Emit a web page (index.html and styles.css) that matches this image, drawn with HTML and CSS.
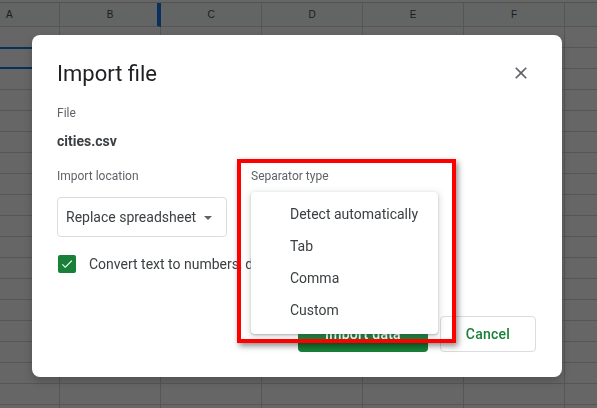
FILE: index.html
```html
<!DOCTYPE html>
<html lang="en">
<head>
    <meta charset="UTF-8">
    <meta name="viewport" content="width=device-width, initial-scale=1.0">
    <title>Import file</title>
    <link rel="stylesheet" href="styles.css">
</head>
<body>

    <!-- Spreadsheet behind the dialog -->
    <div class="sheet" id="sheet">
        <div class="row head">
            <div class="cell first">A</div>
            <div class="cell resize">B</div>
            <div class="cell">C</div>
            <div class="cell">D</div>
            <div class="cell">E</div>
            <div class="cell">F</div>
            <div class="cell"></div>
        </div>
    </div>

    <div class="scrim"></div>

    <!-- Import dialog -->
    <div class="dialog">
        <div class="dialog-title">
            <h1>Import file</h1>
            <button class="close" aria-label="Close">
                <svg width="20" height="20" viewBox="0 0 24 24"><path fill="#5f6368" d="M19 6.41L17.59 5 12 10.590 6.41 5 5 6.41 10.59 12 5 17.59 6.41 19 12 13.41 17.59 19 19 17.59 13.41 12z"/></svg>
            </button>
        </div>

        <div class="label file-label">File</div>
        <div class="file-name">cities.csv</div>

        <div class="options">
            <div class="option-col">
                <div class="label">Import location</div>
                <div class="select">
                    <span>Replace spreadsheet</span>
                    <span class="arrow"></span>
                </div>
                <label class="check-row">
                    <span class="checkbox">
                        <svg width="14" height="14" viewBox="0 0 24 24"><path fill="#fff" d="M9 16.17L4.83 12l-1.42 1.41L9 19 21 7l-1.41-1.41z"/></svg>
                    </span>
                    <span class="check-text">Convert text to numbers, dates, and formulas</span>
                </label>
            </div>
            <div class="option-col sep">
                <div class="label">Separator type</div>
                <div class="menu-anchor">
                    <ul class="menu">
                        <li>Detect automatically</li>
                        <li>Tab</li>
                        <li>Comma</li>
                        <li>Custom</li>
                    </ul>
                </div>
            </div>
        </div>

        <div class="actions">
            <button class="btn primary">Import data</button>
            <button class="btn">Cancel</button>
        </div>

        <!-- Red highlight drawn on the screenshot -->
        <div class="highlight"></div>
    </div>

    <script>
        // fill the grid rows
        const sheet = document.getElementById('sheet');
        for (let r = 1; r <= 19; r++) {
            const row = document.createElement('div');
            row.className = 'row';
            for (let c = 0; c < 7; c++) {
                const cell = document.createElement('div');
                cell.className = c === 0 ? 'cell first' : 'cell';
                if (r === 2 && c === 0) {
                    cell.classList.add('selected');
                }
                row.appendChild(cell);
            }
            sheet.appendChild(row);
        }
    </script>

</body>
</html>
```

FILE: styles.css
```css
body {
    margin: 0;
    font-family: Roboto, Arial, sans-serif;
    background-color: #fff;
    overflow: hidden;
    height: 100vh;
}

/* Spreadsheet grid */
.sheet {
    padding-top: 2px;
    overflow: hidden;
}

.row {
    display: flex;
    height: 21px;
}

.cell {
    flex: 0 0 101px;
    box-sizing: border-box;
    border-right: 1px solid #d6d6d6;
    border-bottom: 1px solid #d6d6d6;
}

/* column A is cut off by the left edge */
.cell.first {
    flex-basis: 60px;
}

/* selected cell, its left edge is off screen */
.cell.selected {
    border-bottom-color: #1a73e8;
    box-shadow: 0 -1px 0 #1a73e8, inset 0 1px 0 #1a73e8, inset 0 -1px 0 #1a73e8;
}

.row.head {
    height: 24px;
    border-top: 1px solid #cfcfcf;
    background-color: #f8f9fa;
}

.row.head .cell {
    display: flex;
    align-items: center;
    justify-content: center;
    font-family: "Liberation Sans", Arial, sans-serif;
    font-size: 10px;
    color: #4a4d50;
}

.row.head .cell.first {
    justify-content: flex-start;
    padding-left: 6px;
}

.row.head .cell.resize {
    border-right: 4px solid #1a73e8;
    padding-left: 3px;
}

.scrim {
    position: fixed;
    top: 0;
    left: 0;
    right: 0;
    bottom: 0;
    background-color: rgba(0, 0, 0, 0.6);
}

/* Dialog */
.dialog {
    position: absolute;
    left: 32px;
    top: 35px;
    width: 530px;
    height: 342px;
    box-sizing: border-box;
    padding: 23px 26px 25px 25px;
    background-color: #fff;
    border-radius: 8px;
    box-shadow: 0 4px 8px rgba(0, 0, 0, 0.2);
}

.dialog-title {
    display: flex;
    justify-content: space-between;
    align-items: center;
    height: 32px;
}

.dialog-title h1 {
    margin: 0;
    font-size: 22px;
    font-weight: 400;
    line-height: 32px;
    color: #202124;
}

.close {
    width: 30px;
    height: 30px;
    padding: 0;
    border: none;
    background: none;
    display: flex;
    align-items: center;
    justify-content: center;
    margin-top: -2px;
}

.label {
    font-size: 12px;
    line-height: 16px;
    color: #5f6368;
}

.file-label {
    margin-top: 15px;
}

.file-name {
    margin-top: 10px;
    font-size: 14px;
    font-weight: 700;
    line-height: 20px;
    color: #3c4043;
}

.options {
    display: flex;
    gap: 24px;
    margin-top: 17px;
}

.option-col {
    width: 170px;
}

.option-col.sep {
    flex: 1;
}

.select {
    margin-top: 13px;
    height: 40px;
    box-sizing: border-box;
    border: 1px solid #dadce0;
    border-radius: 4px;
    display: flex;
    align-items: center;
    justify-content: space-between;
    padding: 0 14px 0 8px;
    font-size: 14px;
    color: #3c4043;
}

.arrow {
    width: 0;
    height: 0;
    border-left: 4px solid transparent;
    border-right: 4px solid transparent;
    border-top: 4px solid #5f6368;
    margin-top: 2px;
}

.check-row {
    display: flex;
    align-items: center;
    height: 20px;
    margin-top: 17px;
    font-size: 14px;
    line-height: 20px;
    color: #3c4043;
    white-space: nowrap;
}

/* the rest of the label sits under the open menu */
.check-text {
    flex-shrink: 0;
    width: 162px;
    overflow: hidden;
}

.checkbox {
    flex: 0 0 18px;
    height: 18px;
    margin: 0 13px 0 1px;
    border-radius: 2px;
    background-color: #188038;
    display: flex;
    align-items: center;
    justify-content: center;
}

/* Open separator dropdown */
.menu-anchor {
    position: relative;
}

.menu {
    position: absolute;
    top: 8px;
    left: 0;
    width: 187px;
    margin: 0;
    padding: 6px 0 8px;
    list-style: none;
    background-color: #fff;
    border-radius: 4px;
    box-shadow: 0 1px 2px rgba(60, 64, 67, 0.3), 0 2px 6px 2px rgba(60, 64, 67, 0.15);
    z-index: 2;
}

.menu li {
    height: 32px;
    line-height: 32px;
    padding-left: 39px;
    font-size: 14px;
    color: #3c4043;
}

/* Buttons */
.actions {
    display: flex;
    justify-content: flex-end;
    gap: 12px;
    margin-top: 42px;
}

.btn {
    height: 36px;
    width: 96px;
    border: 1px solid #dadce0;
    border-radius: 4px;
    background-color: #fff;
    color: #188038;
    font-family: Roboto, Arial, sans-serif;
    font-size: 14px;
    font-weight: 500;
    letter-spacing: 0.25px;
}

.btn.primary {
    width: 130px;
    border: none;
    background-color: #188038;
    color: #fff;
}

.highlight {
    position: absolute;
    left: 205px;
    top: 124px;
    width: 219px;
    height: 184px;
    box-sizing: border-box;
    border: 4px solid #f00;
    box-shadow: 2px 3px 6px rgba(0, 0, 0, 0.45);
    z-index: 3;
    pointer-events: none;
}
```
